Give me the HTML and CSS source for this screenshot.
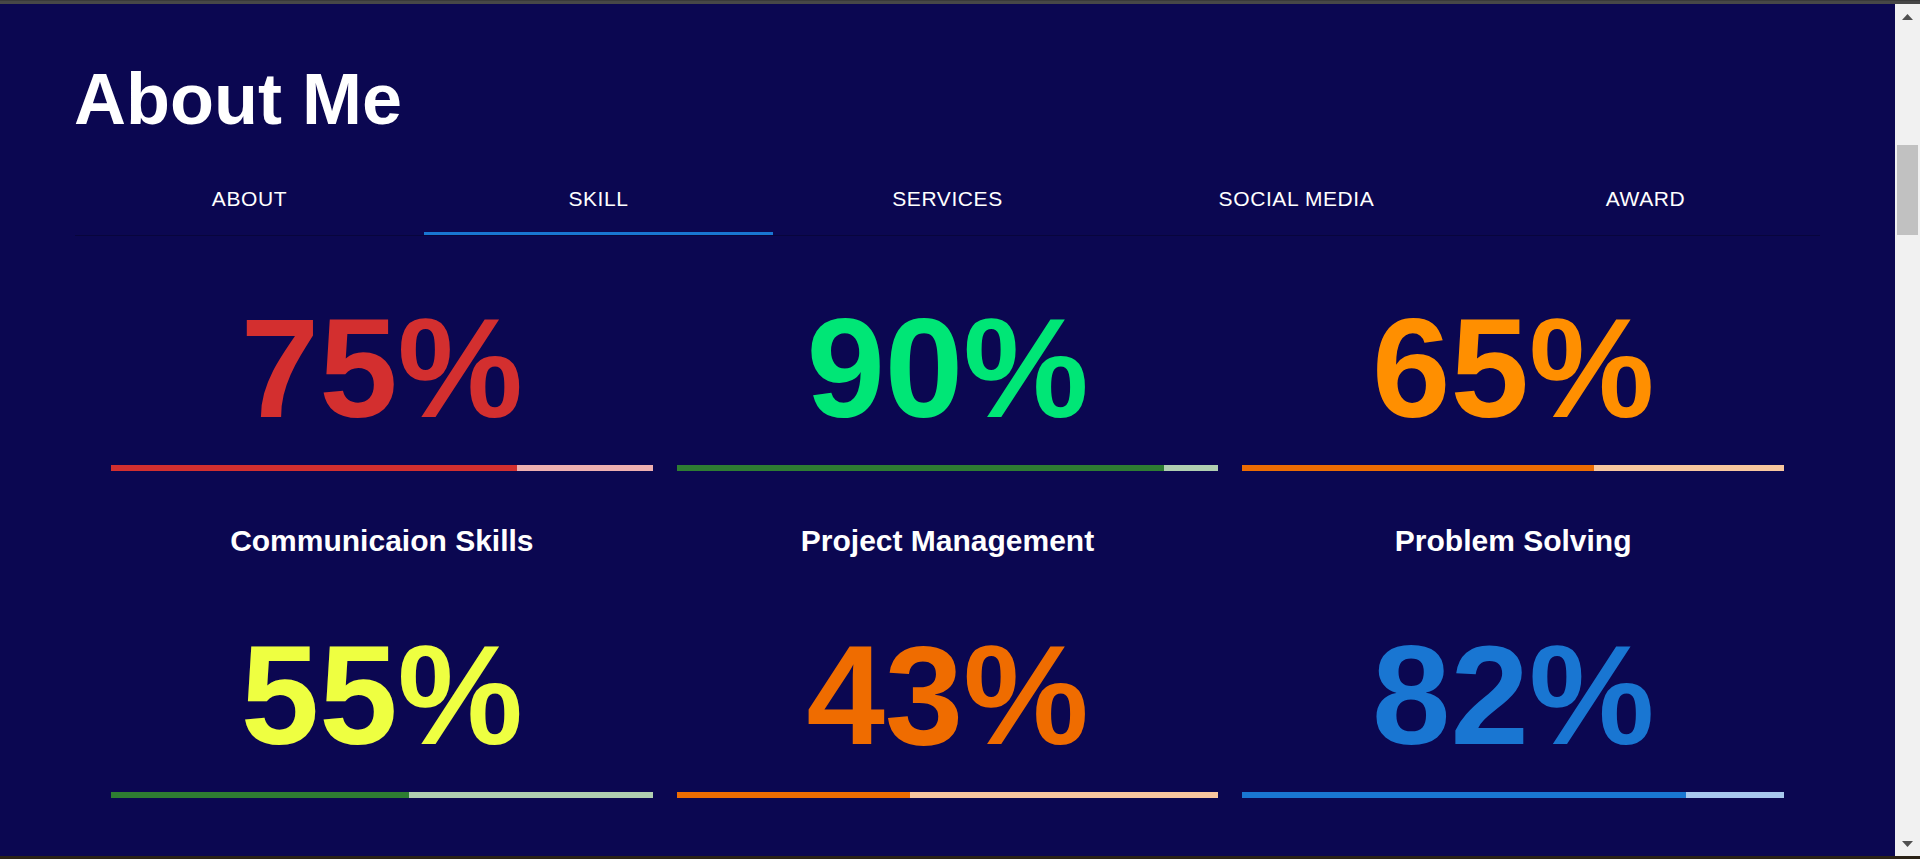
FILE: index.html
```html
<!DOCTYPE html>
<html lang="en">
<head>
<meta charset="utf-8">
<title>About Me</title>
<link rel="stylesheet" href="styles.css">
</head>
<body>
<div class="frame-top"></div>
<div class="window">
  <main class="page">
    <h1 class="title">About Me</h1>
    <nav class="tabs">
      <div class="tab">ABOUT</div>
      <div class="tab tab-active">SKILL</div>
      <div class="tab">SERVICES</div>
      <div class="tab">SOCIAL MEDIA</div>
      <div class="tab">AWARD</div>
    </nav>
    <section class="skills">
      <div class="skill">
        <div class="pct c-red">75%</div>
        <div class="bar t-red"><div class="fill f-red" style="width:75%"></div></div>
        <div class="label">Communicaion Skills</div>
      </div>
      <div class="skill">
        <div class="pct c-green">90%</div>
        <div class="bar t-green"><div class="fill f-green" style="width:90%"></div></div>
        <div class="label">Project Management</div>
      </div>
      <div class="skill">
        <div class="pct c-amber">65%</div>
        <div class="bar t-orange"><div class="fill f-orange" style="width:65%"></div></div>
        <div class="label">Problem Solving</div>
      </div>
      <div class="skill">
        <div class="pct c-lime">55%</div>
        <div class="bar t-green"><div class="fill f-green" style="width:55%"></div></div>
      </div>
      <div class="skill">
        <div class="pct c-orange">43%</div>
        <div class="bar t-orange"><div class="fill f-orange" style="width:43%"></div></div>
      </div>
      <div class="skill">
        <div class="pct c-blue">82%</div>
        <div class="bar t-blue"><div class="fill f-blue" style="width:82%"></div></div>
      </div>
    </section>
  </main>
  <div class="scrollbar">
    <div class="sb-btn">
      <svg width="11" height="6" viewBox="0 0 11 6"><polygon points="5.5,0 11,6 0,6" fill="#505050"/></svg>
    </div>
    <div class="sb-track"><div class="sb-thumb"></div></div>
    <div class="sb-btn">
      <svg width="11" height="6" viewBox="0 0 11 6"><polygon points="0,0 11,0 5.5,6" fill="#505050"/></svg>
    </div>
  </div>
</div>
<div class="frame-bottom"></div>
</body>
</html>
```
FILE: styles.css
```css
html, body {
  margin: 0;
  padding: 0;
}
body {
  width: 1920px;
  height: 859px;
  overflow: hidden;
  display: flex;
  flex-direction: column;
  font-family: "Liberation Sans", Arial, sans-serif;
  background: #0b0751;
}
.frame-top {
  height: 4px;
  background: #474747;
  border-top: 1px solid #3a3a3a;
  box-sizing: border-box;
  flex: none;
}
.frame-bottom {
  height: 3px;
  background: #2b2216;
  flex: none;
}
.window {
  flex: 1;
  display: flex;
  min-height: 0;
}
.page {
  flex: 1;
  background: #0b0751;
  padding: 51px 71px 0 74px;
  overflow: hidden;
  color: #ffffff;
}
.title {
  margin: 0;
  font-size: 72px;
  line-height: 88px;
  font-weight: 700;
  color: #ffffff;
}
.tabs {
  margin: 20px 0 0 1px;
  width: 1745px;
  display: grid;
  grid-template-columns: repeat(5, 349px);
  border-bottom: 1px solid rgba(0, 0, 0, 0.25);
}
.tab {
  height: 72px;
  line-height: 72px;
  text-align: center;
  font-size: 21px;
  letter-spacing: 0.6px;
  color: #ffffff;
}
.tab-active {
  box-shadow: inset 0 -3px 0 #1976d2;
}
.skills {
  margin-top: 60px;
  padding: 0 40px 0 37px;
  display: grid;
  grid-template-columns: repeat(3, 1fr);
  column-gap: 24px;
  row-gap: 64px;
}
.skill {
  display: flex;
  flex-direction: column;
  align-items: stretch;
  text-align: center;
}
.pct {
  font-size: 141px;
  line-height: 144px;
  font-weight: 700;
}
.bar {
  margin-top: 25px;
  height: 6px;
  display: flex;
}
.fill {
  height: 100%;
}
.label {
  margin-top: 52px;
  font-size: 30px;
  line-height: 36px;
  font-weight: 700;
  color: #ffffff;
}
.c-red { color: #d32f2f; }
.c-green { color: #00e676; }
.c-amber { color: #ff8f00; }
.c-lime { color: #eeff41; }
.c-orange { color: #ef6c00; }
.c-blue { color: #1976d2; }
.t-red { background: #eeb0b0; }
.f-red { background: #d32f2f; }
.t-green { background: #b0ceb1; }
.f-green { background: #2e7d32; }
.t-orange { background: #f8c79f; }
.f-orange { background: #ed6c02; }
.t-blue { background: #a8c8ee; }
.f-blue { background: #1976d2; }
.scrollbar {
  width: 25px;
  flex: none;
  background: #f1f1f1;
  display: flex;
  flex-direction: column;
}
.sb-btn {
  height: 25px;
  display: flex;
  align-items: center;
  justify-content: center;
  flex: none;
}
.sb-track {
  flex: 1;
  padding: 0 2px;
}
.sb-thumb {
  margin-top: 116px;
  height: 90px;
  background: #c1c1c1;
}
```
